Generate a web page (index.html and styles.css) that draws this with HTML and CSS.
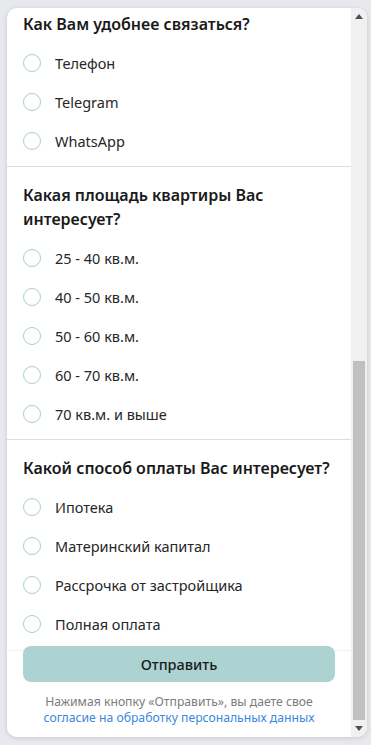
FILE: index.html
```html
<!DOCTYPE html>
<html lang="ru">
<head>
<meta charset="utf-8">
<title>Опрос</title>
<link rel="stylesheet" href="styles.css">
</head>
<body>
<div class="panel">
  <div class="main">
    <div class="content">
      <section class="group first">
        <h2 class="question">Как Вам удобнее связаться?</h2>
        <label class="option"><span class="radio"></span><span>Телефон</span></label>
        <label class="option"><span class="radio"></span><span>Telegram</span></label>
        <label class="option"><span class="radio"></span><span>WhatsApp</span></label>
      </section>
      <section class="group">
        <h2 class="question">Какая площадь квартиры Вас интересует?</h2>
        <label class="option"><span class="radio"></span><span>25 - 40 кв.м.</span></label>
        <label class="option"><span class="radio"></span><span>40 - 50 кв.м.</span></label>
        <label class="option"><span class="radio"></span><span>50 - 60 кв.м.</span></label>
        <label class="option"><span class="radio"></span><span>60 - 70 кв.м.</span></label>
        <label class="option"><span class="radio"></span><span>70 кв.м. и выше</span></label>
      </section>
      <section class="group last">
        <h2 class="question">Какой способ оплаты Вас интересует?</h2>
        <label class="option"><span class="radio"></span><span>Ипотека</span></label>
        <label class="option"><span class="radio"></span><span>Материнский капитал</span></label>
        <label class="option"><span class="radio"></span><span>Рассрочка от застройщика</span></label>
        <label class="option"><span class="radio"></span><span>Полная оплата</span></label>
      </section>
    </div>
    <div class="footer">
      <button class="submit" type="button">Отправить</button>
      <p class="consent"><span class="consent-line">Нажимая кнопку «Отправить», вы даете свое</span><a href="#" class="consent-link">согласие на обработку персональных данных</a></p>
    </div>
  </div>
  <div class="scrollbar">
    <div class="arrow"><svg width="8" height="5" viewBox="0 0 8 5"><path d="M0 5 L4 0 L8 5 Z" fill="#505050"/></svg></div>
    <div class="track"></div>
    <div class="thumb"></div>
    <div class="arrow"><svg width="8" height="5" viewBox="0 0 8 5"><path d="M0 0 L8 0 L4 5 Z" fill="#505050"/></svg></div>
  </div>
</div>
</body>
</html>
```

FILE: styles.css
```css
* { box-sizing: border-box; }

html, body {
  margin: 0;
  height: 100%;
}

body {
  background: #e8e9ec;
  padding: 8px 4px 0 7px;
  font-family: "Noto Sans", "Open Sans", Arial, sans-serif;
  color: #1f1f1f;
}

.panel {
  width: 360px;
  height: 729px;
  background: #ffffff;
  border-radius: 10px;
  overflow: hidden;
  display: flex;
  box-shadow: 0 1px 5px rgba(0, 0, 0, 0.14);
}

.main {
  flex: 1;
  display: flex;
  flex-direction: column;
  min-width: 0;
}

.content {
  flex: 1;
  overflow: hidden;
}

.group {
  padding: 16px 16px 6px;
  border-bottom: 1px solid #dddddd;
}

.group.first {
  padding-top: 4px;
}

.group.last {
  border-bottom: none;
  padding-bottom: 0;
}

.question {
  margin: 0 0 7px;
  font-size: 16px;
  line-height: 24px;
  font-weight: 600;
  color: #1a1a1a;
}

.option {
  display: flex;
  align-items: center;
  height: 39px;
  font-size: 14.5px;
  color: #262626;
}

.radio {
  width: 18px;
  height: 18px;
  border: 1.7px solid #a6d0d0;
  border-radius: 50%;
  margin-right: 14px;
  flex: none;
}

.footer {
  padding: 2px 16px 11px;
  background: linear-gradient(#ffffff 6px, #f2f2f2 6px, #f2f2f2 7px, #ffffff 7px);
}

.submit {
  display: block;
  width: 100%;
  height: 36px;
  border: none;
  border-radius: 8px;
  background: #acd2d2;
  font-family: inherit;
  font-size: 14.5px;
  font-weight: 500;
  color: #1a1a1a;
}

.consent {
  margin: 12px 0 0;
  display: flex;
  flex-direction: column;
  align-items: center;
  gap: 0;
  text-align: center;
  font-size: 12.2px;
  line-height: 16px;
  color: #7c7c7c;
}

.consent-line {
  display: block;
}

.consent-link {
  display: block;
  color: #3a88e0;
  text-decoration: none;
}

.scrollbar {
  width: 16px;
  flex: none;
  background: #f0f0f0;
  display: flex;
  flex-direction: column;
  align-items: center;
}

.arrow {
  height: 17px;
  display: flex;
  align-items: center;
  justify-content: center;
}

.track {
  flex: 1;
}

.thumb {
  width: 12px;
  height: 359px;
  background: #c0c0c0;
}
```
